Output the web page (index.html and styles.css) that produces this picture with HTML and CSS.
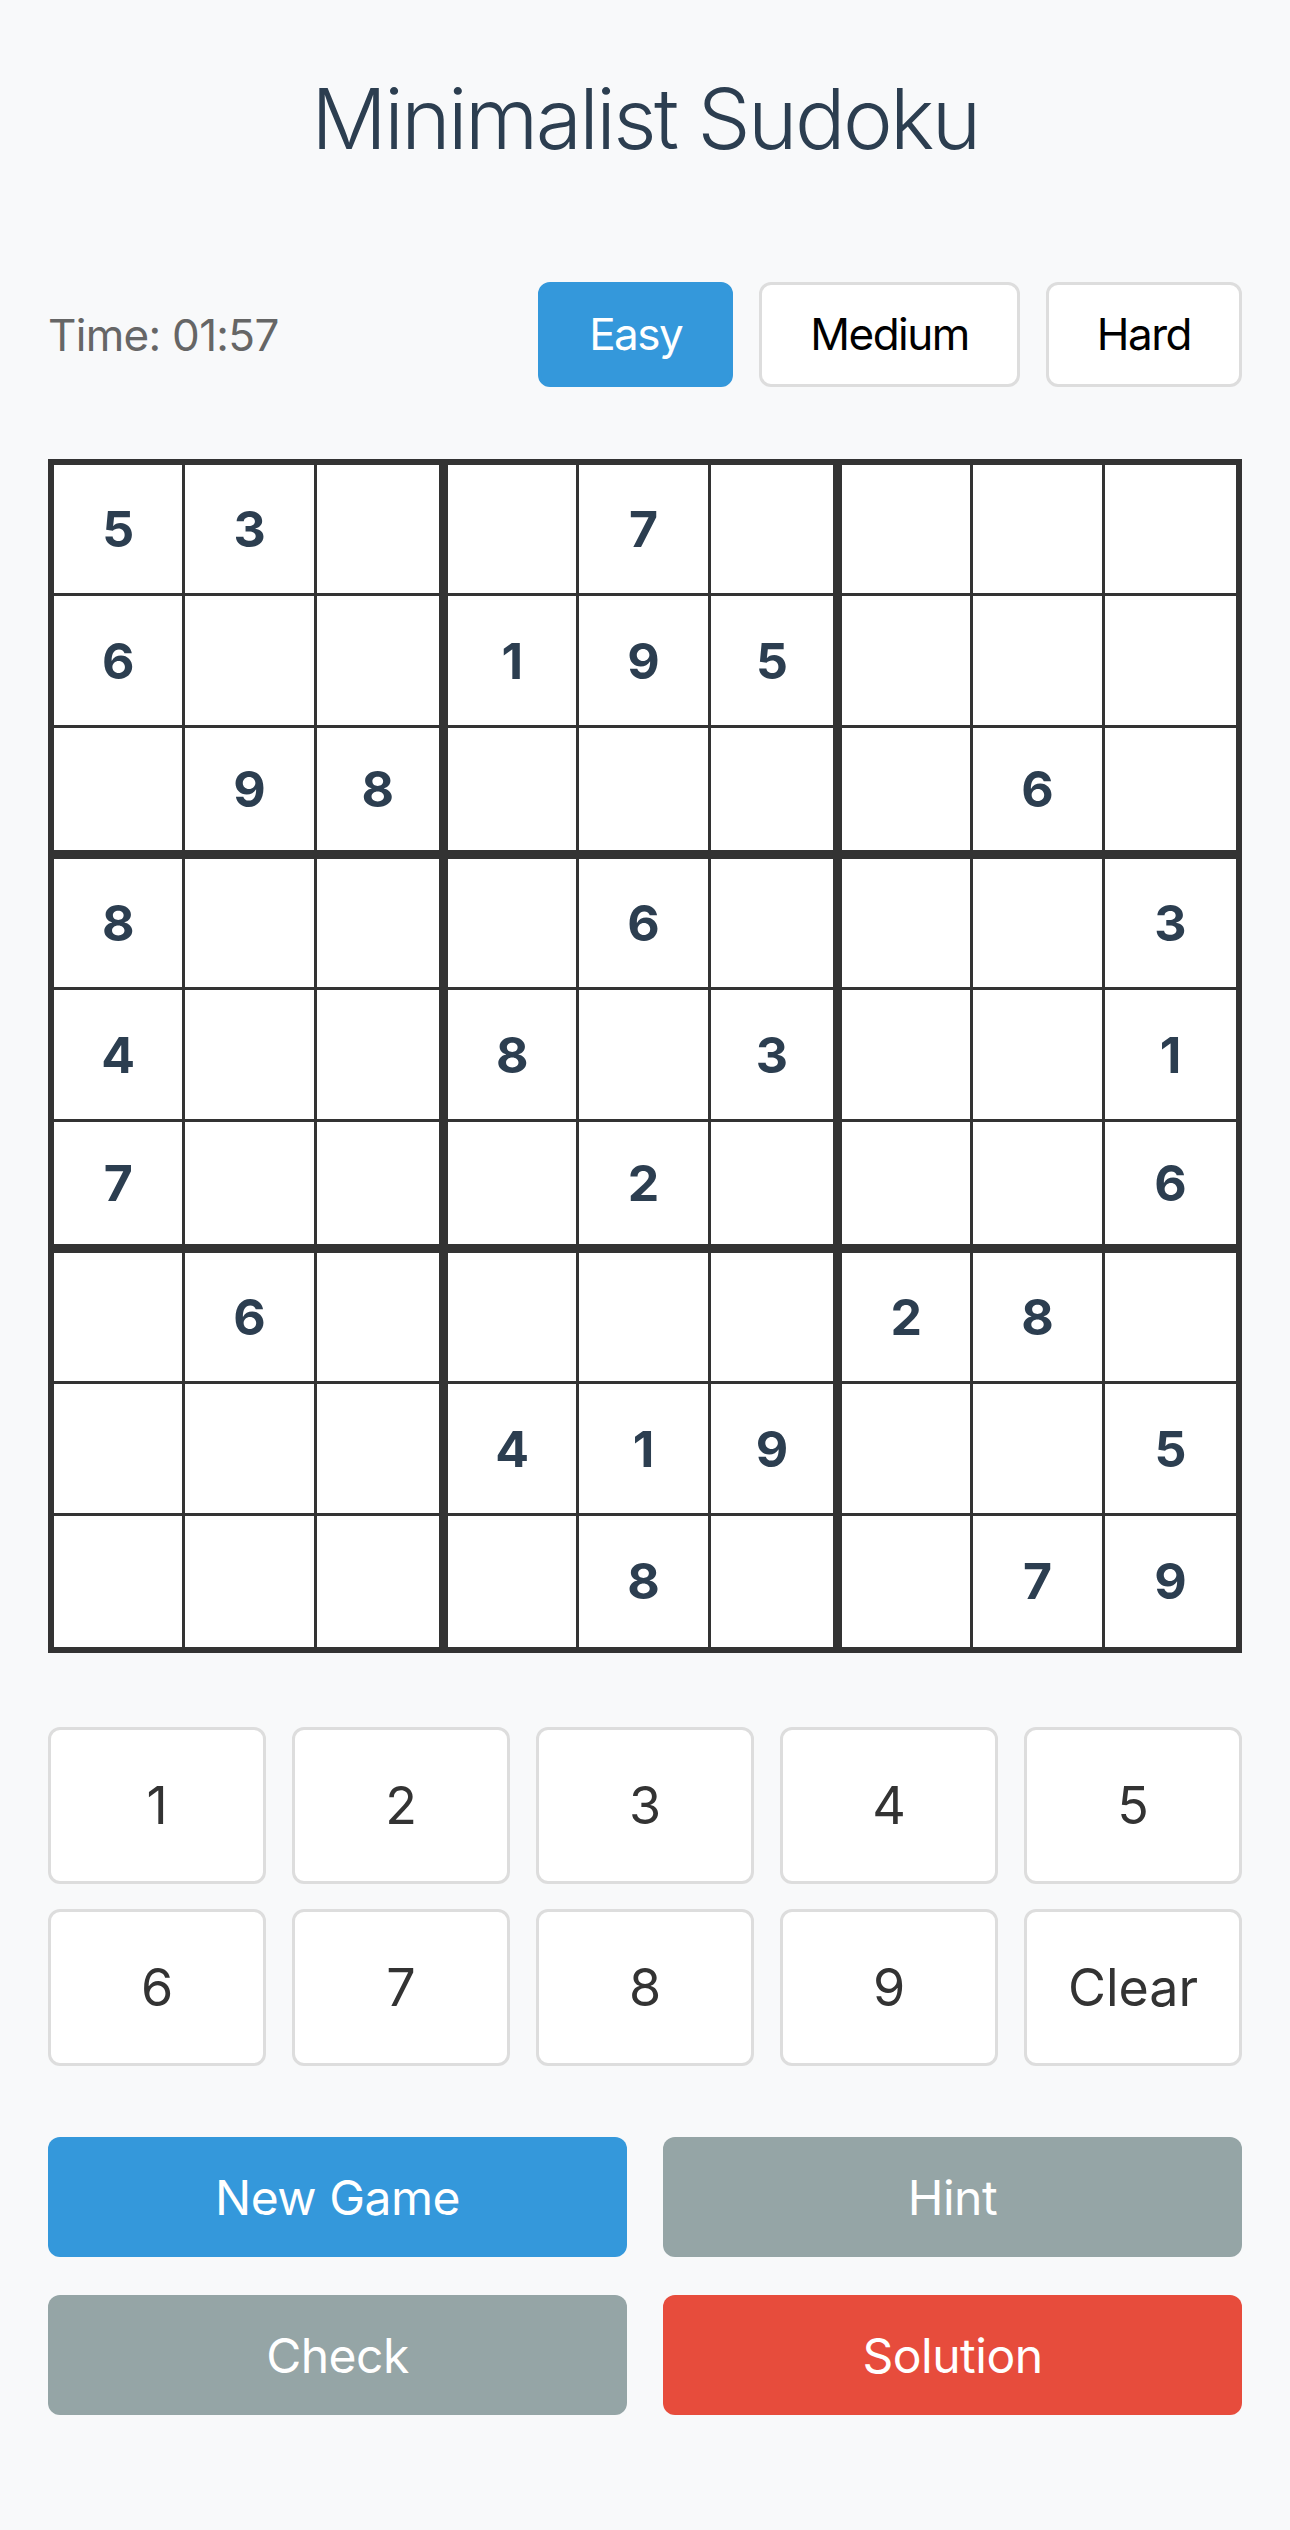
FILE: index.html
```html
<!DOCTYPE html>
<html lang="en">
<head>
<meta charset="utf-8">
<title>Minimalist Sudoku</title>
<link rel="stylesheet" href="styles.css">
</head>
<body>
<main class="app">
  <h1 class="title">Minimalist Sudoku</h1>

  <div class="controls">
    <div class="timer">Time: 01:57</div>
    <div class="levels">
      <button class="level active">Easy</button>
      <button class="level">Medium</button>
      <button class="level">Hard</button>
    </div>
  </div>

  <div class="board">
    <div class="cell">5</div><div class="cell">3</div><div class="cell"></div><div class="cell"></div><div class="cell">7</div><div class="cell"></div><div class="cell"></div><div class="cell"></div><div class="cell"></div>
    <div class="cell">6</div><div class="cell"></div><div class="cell"></div><div class="cell">1</div><div class="cell">9</div><div class="cell">5</div><div class="cell"></div><div class="cell"></div><div class="cell"></div>
    <div class="cell"></div><div class="cell">9</div><div class="cell">8</div><div class="cell"></div><div class="cell"></div><div class="cell"></div><div class="cell"></div><div class="cell">6</div><div class="cell"></div>
    <div class="cell">8</div><div class="cell"></div><div class="cell"></div><div class="cell"></div><div class="cell">6</div><div class="cell"></div><div class="cell"></div><div class="cell"></div><div class="cell">3</div>
    <div class="cell">4</div><div class="cell"></div><div class="cell"></div><div class="cell">8</div><div class="cell"></div><div class="cell">3</div><div class="cell"></div><div class="cell"></div><div class="cell">1</div>
    <div class="cell">7</div><div class="cell"></div><div class="cell"></div><div class="cell"></div><div class="cell">2</div><div class="cell"></div><div class="cell"></div><div class="cell"></div><div class="cell">6</div>
    <div class="cell"></div><div class="cell">6</div><div class="cell"></div><div class="cell"></div><div class="cell"></div><div class="cell"></div><div class="cell">2</div><div class="cell">8</div><div class="cell"></div>
    <div class="cell"></div><div class="cell"></div><div class="cell"></div><div class="cell">4</div><div class="cell">1</div><div class="cell">9</div><div class="cell"></div><div class="cell"></div><div class="cell">5</div>
    <div class="cell"></div><div class="cell"></div><div class="cell"></div><div class="cell"></div><div class="cell">8</div><div class="cell"></div><div class="cell"></div><div class="cell">7</div><div class="cell">9</div>
  </div>

  <div class="numpad">
    <button class="num">1</button>
    <button class="num">2</button>
    <button class="num">3</button>
    <button class="num">4</button>
    <button class="num">5</button>
    <button class="num">6</button>
    <button class="num">7</button>
    <button class="num">8</button>
    <button class="num">9</button>
    <button class="num">Clear</button>
  </div>

  <div class="actions">
    <button class="action primary">New Game</button>
    <button class="action muted">Hint</button>
    <button class="action muted">Check</button>
    <button class="action danger">Solution</button>
  </div>
</main>
</body>
</html>
```

FILE: styles.css
```css
* {
  box-sizing: border-box;
}

html, body {
  margin: 0;
  padding: 0;
  background: #f8f9fa;
}

body {
  font-family: Inter, "Liberation Sans", sans-serif;
  color: #333;
}

.app {
  padding: 76px 48px 100px;
}

.title {
  margin: 0;
  text-align: center;
  font-size: 84px;
  line-height: 85px;
  font-weight: 300;
  letter-spacing: -2.6px;
  color: #2c3e50;
}

.controls {
  margin-top: 121px;
  display: flex;
  align-items: center;
  justify-content: space-between;
}

.timer {
  font-size: 44px;
  letter-spacing: -0.7px;
  color: #666;
}

.levels {
  display: flex;
  gap: 26px;
}

.level {
  font-family: inherit;
  font-size: 44px;
  line-height: 51px;
  letter-spacing: -1.5px;
  padding: 24px 48px;
  border: 3px solid #ddd;
  border-radius: 12px;
  background: #fff;
  color: #000;
}

.level.active {
  background: #3498db;
  border-color: #3498db;
  color: #fff;
}

.board {
  margin-top: 72px;
  display: grid;
  grid-template-columns: repeat(9, 1fr);
  border: 6px solid #333;
  background: #fff;
}

.cell {
  aspect-ratio: 1 / 1;
  display: flex;
  align-items: center;
  justify-content: center;
  border-right: 3px solid #333;
  border-bottom: 3px solid #333;
  font-size: 50px;
  font-weight: 700;
  color: #2c3e50;
}

.cell:nth-child(9n) {
  border-right: none;
}

.cell:nth-child(9n+3),
.cell:nth-child(9n+6) {
  border-right-width: 9px;
}

.cell:nth-child(n+19):nth-child(-n+27),
.cell:nth-child(n+46):nth-child(-n+54) {
  border-bottom-width: 9px;
}

.cell:nth-child(n+73) {
  border-bottom: none;
}

.numpad {
  margin-top: 74px;
  display: grid;
  grid-template-columns: repeat(5, 1fr);
  column-gap: 26px;
  row-gap: 25px;
}

.num {
  height: 157px;
  font-family: inherit;
  font-size: 52px;
  color: #333;
  background: #fff;
  border: 3px solid #ddd;
  border-radius: 12px;
}

.actions {
  margin-top: 71px;
  display: grid;
  grid-template-columns: 1fr 1fr;
  column-gap: 36px;
  row-gap: 38px;
}

.action {
  height: 120px;
  font-family: inherit;
  font-size: 48px;
  letter-spacing: -0.5px;
  color: #fff;
  border: none;
  border-radius: 12px;
}

.action.primary {
  background: #3498db;
}

.action.muted {
  background: #95a5a6;
}

.action.danger {
  background: #e74c3c;
}
```
